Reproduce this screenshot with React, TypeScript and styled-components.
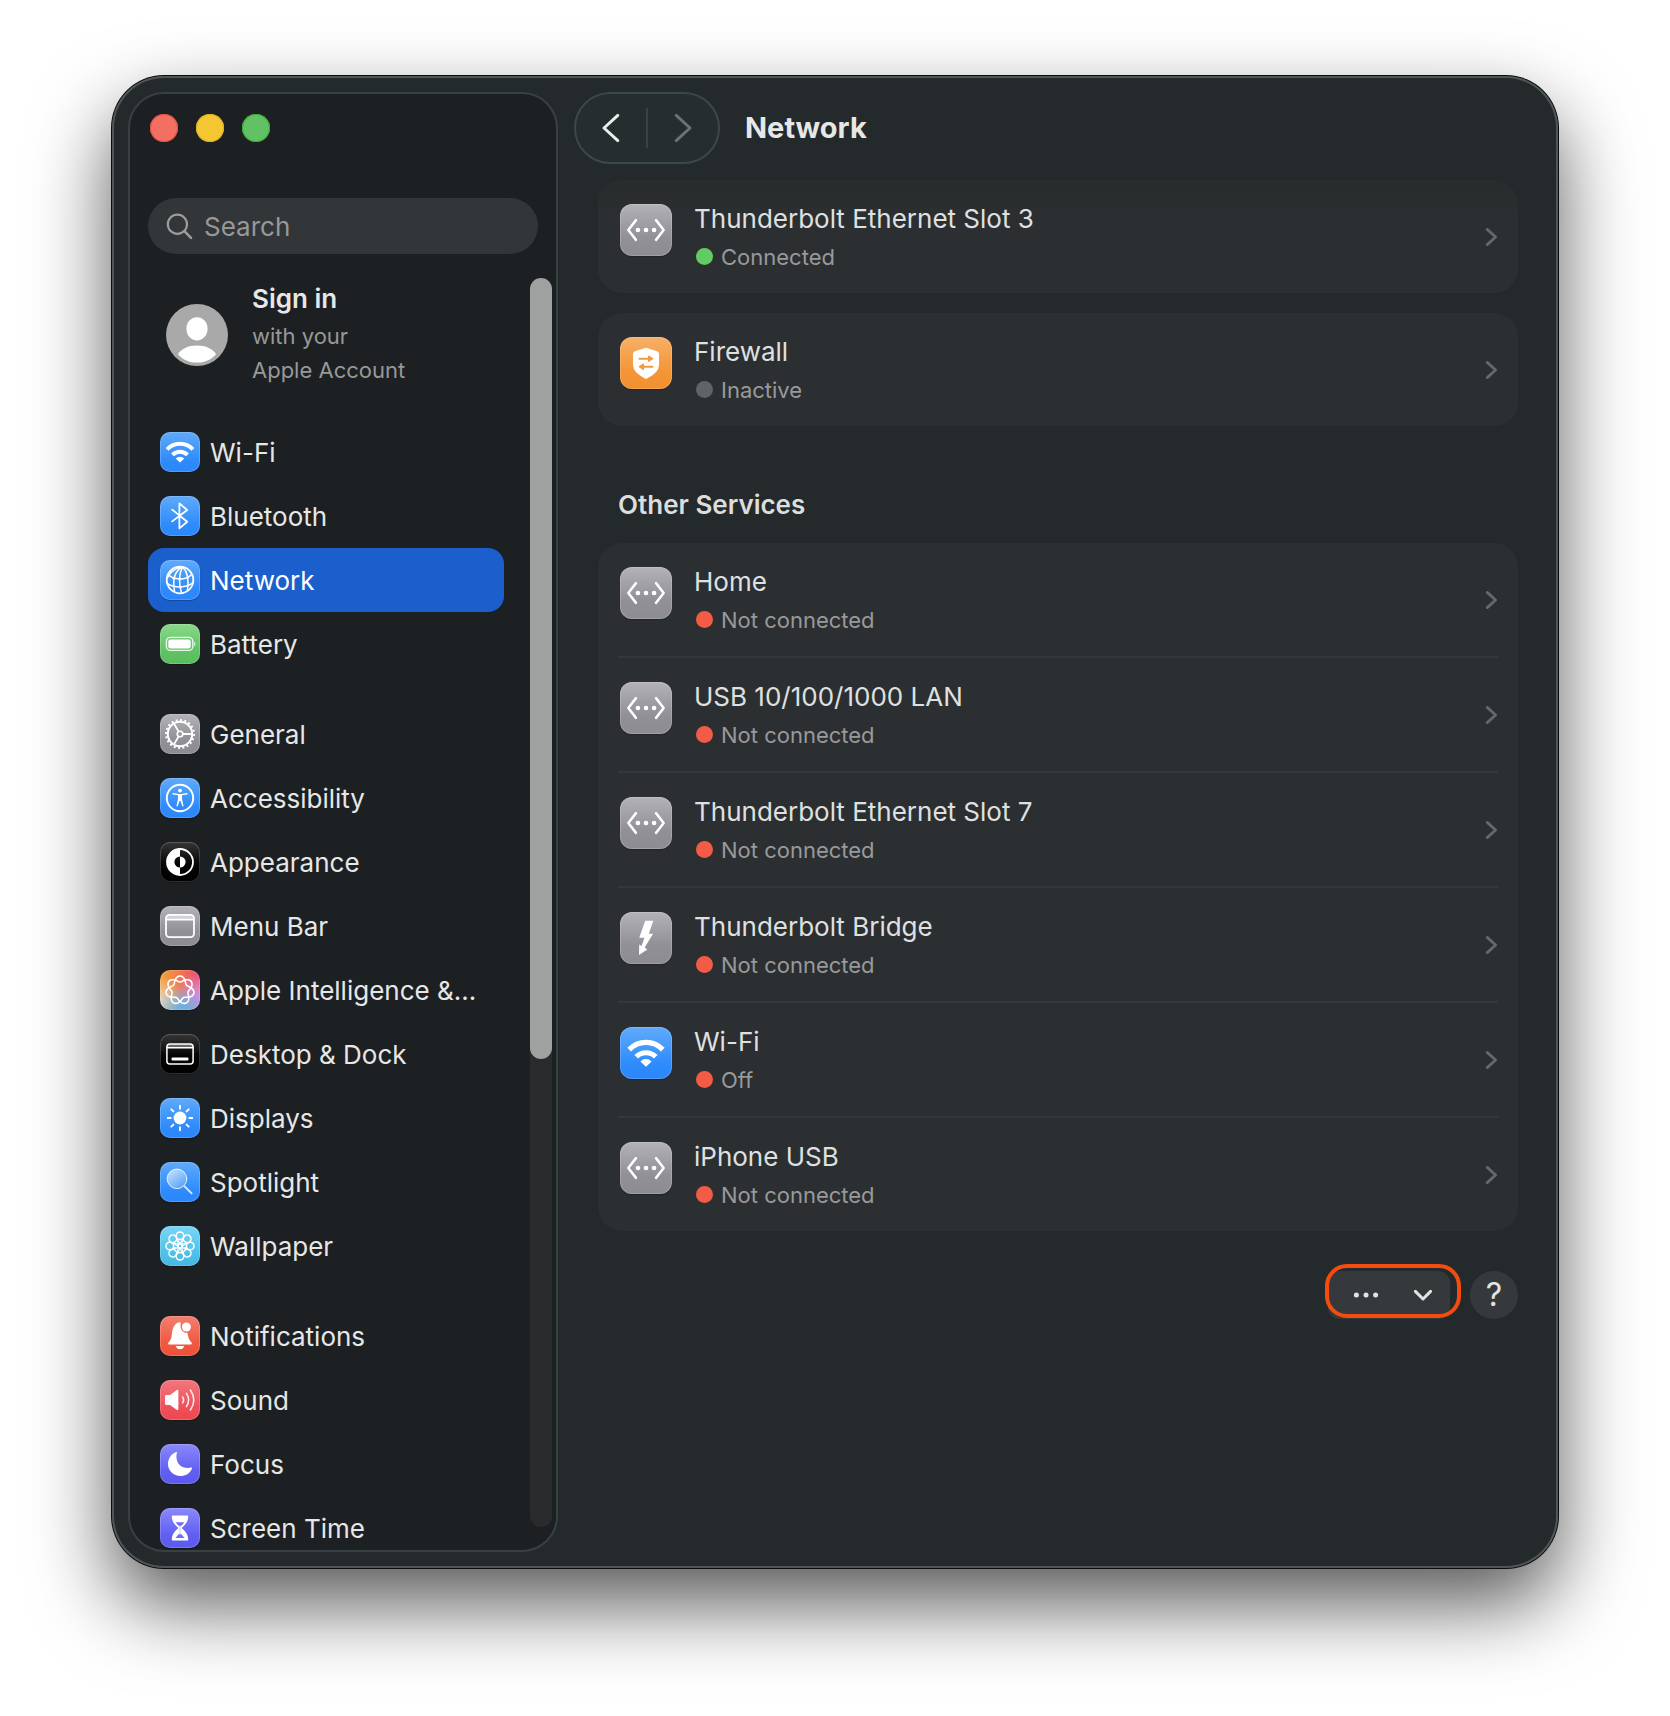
import React from "react";
import styled, { createGlobalStyle, css } from "styled-components";

const GlobalStyle = createGlobalStyle`
  *, *::before, *::after { box-sizing: border-box; }
  body {
    margin: 0;
    background: #fff;
    color: #e6e7e7;
    font-family: Inter, "Liberation Sans", sans-serif;
    font-size: 26px;
    line-height: 34px;
  }
  button, input { font: inherit; color: inherit; border: 0; padding: 0; background: none; }
  ul { list-style: none; margin: 0; padding: 0; }
  h1, h2, p { margin: 0; }
  svg { display: block; }
`;

const Desktop = styled.div`
  height: 100vh;
  min-height: 720px;
  padding: 76px 112px 148px;
`;

const Window = styled.div`
  display: flex;
  height: 100%;
  padding: 16px 0 16px 16px;
  border-radius: 52px;
  background: #24292b;
  box-shadow: inset 0 0 0 2px #505657, 0 0 0 1px #0a0c0c,
    0 36px 80px rgba(0, 0, 0, 0.66);
`;

const Sidebar = styled.aside`
  flex: 0 0 430px;
  display: flex;
  flex-direction: column;
  padding: 20px 4px 0 18px;
  border: 2px solid #374144;
  border-radius: 36px;
  background: #1d2022;
  overflow: hidden;
`;

const TrafficLights = styled.div`
  display: flex;
  gap: 18px;
  padding-left: 2px;
`;

const Light = styled.button<{ $fill: string; $edge: string }>`
  width: 28px;
  height: 28px;
  border-radius: 50%;
  background: ${(p) => p.$fill};
  box-shadow: inset 0 0 0 1px ${(p) => p.$edge};
`;

const SearchField = styled.label`
  display: flex;
  align-items: center;
  gap: 10px;
  height: 56px;
  margin: 56px 14px 24px 0;
  padding: 0 18px;
  border-radius: 28px;
  background: #333638;
  color: #9a9c9d;
`;

const SearchInput = styled.input`
  flex: 1;
  min-width: 0;
  padding-top: 2px;
  outline: none;
  &::placeholder { color: #979999; opacity: 1; }
`;

const Scroller = styled.div`
  flex: 1;
  min-height: 0;
  display: flex;
  gap: 26px;
`;

const NavArea = styled.nav`
  flex: 1;
  min-width: 0;
  overflow-y: auto;
  scrollbar-width: none;
`;

const ScrollTrack = styled.div`
  width: 22px;
  margin-bottom: 23px;
  border-radius: 11px;
  background: #2a2b2c;
`;

const ScrollThumb = styled.div`
  height: 62.5%;
  min-height: 44px;
  border-radius: 11px;
  background: #9fa1a0;
`;

const Account = styled.a`
  display: flex;
  align-items: center;
  gap: 24px;
  padding: 4px 18px 0;
  margin-bottom: 33px;
  color: inherit;
  text-decoration: none;
`;

const AccountName = styled.p`
  font-weight: 600;
  margin-bottom: 3px;
`;

const AccountHint = styled.p`
  font-size: 22px;
  color: #979999;
`;

const NavGroup = styled.ul`
  & + & { margin-top: 26px; }
`;

const NavItem = styled.a<{ $active?: boolean }>`
  display: flex;
  align-items: center;
  gap: 10px;
  height: 64px;
  padding: 0 12px;
  border-radius: 16px;
  color: inherit;
  text-decoration: none;
  white-space: nowrap;
  ${(p) =>
    p.$active &&
    css`
      background: #1a5fcc;
      color: #fff;
    `}
`;

const NavLabel = styled.span`
  padding-top: 2px;
`;

const tones = {
  blue: "linear-gradient(#60aafb, #2f8cfc 70%, #2a86fa)",
  green: "linear-gradient(#8bd88a, #60c466 65%, #58bd5d)",
  gray: "linear-gradient(#b3b2b8, #929097 65%, #8e8c93)",
  black: "linear-gradient(#363636, #050505 55%, #000)",
  cyan: "linear-gradient(#7cd5f6, #4fc1ea 65%, #45b7e0)",
  red: "linear-gradient(#f27f70, #f15a42 65%, #ee5039)",
  pink: "linear-gradient(#f2777f, #f0505a 65%, #ee4751)",
  indigo: "linear-gradient(#8b89fb, #6260f3 65%, #5c59ee)",
  orange: "linear-gradient(#f6b066, #f49638 65%, #f28f2e)",
  spectrum:
    "radial-gradient(circle at 55% 105%, #4db5fb 0, rgba(77,181,251,0) 55%), radial-gradient(circle at 100% 70%, #d48cf6 0, rgba(212,140,246,0) 55%), radial-gradient(circle at 95% 15%, #ef4a68 0, rgba(239,74,104,0) 70%), radial-gradient(circle at 0 80%, #e6d6c8 0, rgba(233,208,180,0) 50%), #f1a13c",
};
type Tone = keyof typeof tones;

const Tile = styled.span<{ $tone: Tone; $large?: boolean }>`
  flex: none;
  width: ${(p) => (p.$large ? 52 : 40)}px;
  height: ${(p) => (p.$large ? 52 : 40)}px;
  margin-top: ${(p) => (p.$large ? 2 : 0)}px;
  border-radius: ${(p) => (p.$large ? 12 : 10)}px;
  background: ${(p) => tones[p.$tone]};
  box-shadow: inset 0 0 0 1px rgba(255, 255, 255, 0.18), 0 1px 1px rgba(0, 0, 0, 0.25);
  & > svg { width: 100%; height: 100%; }
`;

const Main = styled.main`
  flex: 1;
  min-width: 0;
  display: flex;
  flex-direction: column;
`;

const Toolbar = styled.header`
  display: flex;
  align-items: center;
  gap: 25px;
  padding-left: 16px;
`;

const HistoryButtons = styled.div`
  display: flex;
  align-items: center;
  width: 146px;
  height: 72px;
  border: 2px solid #3b484a;
  border-radius: 36px;
  background: #262d2f;
`;

const HistoryButton = styled.button`
  flex: 1;
  display: grid;
  place-items: center;
  height: 100%;
  color: #ececec;
  &:disabled { color: #6c7173; }
`;

const HistoryDivider = styled.span`
  width: 2px;
  height: 40px;
  background: #3b4244;
`;

const Title = styled.h1`
  font-size: 29px;
  font-weight: 700;
`;

const Content = styled.div`
  padding: 16px 40px 0;
`;

const Card = styled.ul`
  padding: 0 20px;
  border-radius: 24px;
  background: #2c2f31;
  & + & { margin-top: 20px; }
`;

const FadedCard = styled(Card)`
  background: linear-gradient(#282c2d, #2c2f31 40px);
`;

const SectionTitle = styled.h2`
  margin: 62px 20px 21px;
  font-size: 26px;
  font-weight: 600;
  color: #dcdddd;
`;

const ServiceItem = styled.li`
  & + & { border-top: 2px solid #34383a; }
`;

const ServiceButton = styled.button`
  display: flex;
  align-items: flex-start;
  gap: 22px;
  width: 100%;
  padding: 22px 0 22px 2px;
  text-align: left;
`;

const ServiceText = styled.span`
  flex: 1;
  display: grid;
  gap: 8px;
`;

const ServiceName = styled.span`
  line-height: 33px;
  color: #dfe0e0;
`;

const ServiceStatus = styled.span`
  display: flex;
  align-items: center;
  gap: 8px;
  padding-left: 2px;
  font-size: 22px;
  line-height: 28px;
  color: #989a9b;
`;

const StatusDot = styled.span<{ $color: string }>`
  width: 17px;
  height: 17px;
  margin-bottom: 1px;
  border-radius: 50%;
  background: ${(p) => p.$color};
`;

const Disclosure = styled.span`
  align-self: center;
  color: #65696b;
`;

const Footer = styled.footer`
  display: flex;
  justify-content: flex-end;
  gap: 20px;
  margin-top: 40px;
`;

const MenuAnchor = styled.div`
  position: relative;
`;

const MenuButton = styled.button`
  display: flex;
  align-items: center;
  justify-content: space-between;
  width: 122px;
  height: 48px;
  padding: 0 17px 0 25px;
  border-radius: 12px;
  background: #35393b;
  color: #e2e3e3;
`;

const Highlight = styled.span`
  position: absolute;
  inset: -7px -11px 1px -3px;
  border: 4px solid #f44c10;
  border-radius: 22px;
  pointer-events: none;
`;

const HelpButton = styled.button`
  width: 48px;
  height: 48px;
  border-radius: 50%;
  background: #35393b;
  font-size: 32px;
  color: #e2e3e3;
`;

/* ---------- glyphs, all on a 40-unit grid ---------- */

const Glyph = ({ children }: { children: React.ReactNode }) => (
  <svg viewBox="0 0 40 40" fill="none" stroke="#fff" strokeWidth="2" strokeLinecap="round" strokeLinejoin="round" aria-hidden="true">
    {children}
  </svg>
);

const knot = (() => {
  const pts: string[] = [];
  for (let i = 0; i < 280; i++) {
    const t = (i / 280) * Math.PI * 4;
    const r = 11.2 + 3 * Math.cos(3.5 * t);
    pts.push(`${(20 + r * Math.sin(t)).toFixed(2)} ${(20.2 - r * Math.cos(t)).toFixed(2)}`);
  }
  return `M${pts.join("L")}Z`;
})();

const octants = [0, 45, 90, 135, 180, 225, 270, 315];
const solid = { fill: "#fff", stroke: "none" };

const glyphs = {
  wifi: (
    <g strokeLinecap="butt" strokeWidth="4">
      <path d="M7.1 17.4A17.6 17.6 0 0 1 32.9 17.4" />
      <path d="M12.5 22.9A10.6 10.6 0 0 1 27.5 22.9" />
      <path d="M15.7 26.5A6 6 0 0 1 24.3 26.5L20 30.6Z" {...solid} />
    </g>
  ),
  bluetooth: <path d="M12.2 13.6L27.2 25.8L19.4 32.4V7.4L27.2 14L12.2 25.4" strokeWidth="1.8" />,
  globe: (
    <g strokeWidth="1.5">
      <circle cx="20" cy="20" r="13.3" strokeWidth="1.8" />
      <path d="M22.5 7C15.5 10.5 12 18 14.6 31.8M22.5 7C19.5 13 18.6 23 21.5 33M22.5 7C27 11 29 20 27.4 30.6M20.5 7C13 9.5 9 14 7.4 18" />
      <path d="M8 14C13 20.5 26 20.5 31.6 14.4M7.3 23.4C13 28 27 28.6 32.8 22.6" />
      <g {...solid}>
        <circle cx="13.6" cy="18.2" r="1.3" />
        <circle cx="19.9" cy="19" r="1.3" />
        <circle cx="27.6" cy="17.6" r="1.3" />
        <circle cx="20.4" cy="27" r="1.3" />
      </g>
    </g>
  ),
  battery: (
    <>
      <rect x="6.4" y="13.4" width="26.4" height="13" rx="4" strokeWidth="1.4" opacity="0.85" />
      <rect x="8.3" y="15.4" width="22.4" height="9" rx="2.2" {...solid} />
      <path d="M34.3 17.4Q36.4 20 34.3 22.4Z" {...solid} />
    </>
  ),
  gear: (
    <>
      <circle cx="20" cy="20" r="12.2" strokeWidth="2" />
      <circle cx="20" cy="20" r="14" strokeWidth="2" strokeLinecap="butt" pathLength="40" strokeDasharray="0.9 1.1" />
      <circle cx="20" cy="20" r="2.8" strokeWidth="1.6" />
      <path d="M23 20H31.5M18.5 17.4L14.2 10M18.5 22.6L14.2 30" strokeWidth="1.8" />
    </>
  ),
  accessibility: (
    <>
      <circle cx="20" cy="20" r="13.2" strokeWidth="1.9" />
      <circle cx="20" cy="12.6" r="1.9" {...solid} />
      <path d="M13 15.7L18.4 16.6Q20 16.8 21.6 16.6L27 15.7" strokeWidth="1.4" />
      <path d="M17.9 16.3H22.1L22 21L23.6 28.2L22.4 28.6L20.4 22.8H19.6L17.6 28.6L16.4 28.2L18 21Z" {...solid} />
    </>
  ),
  appearance: (
    <>
      <circle cx="20" cy="20" r="13" strokeWidth="1.8" />
      <path d="M20 7A13 13 0 0 0 20 33V25.6A5.6 5.6 0 0 1 20 14.4Z" {...solid} />
      <path d="M20 14.4A5.6 5.6 0 0 1 20 25.6Z" {...solid} />
    </>
  ),
  menubar: (
    <>
      <path d="M6 13V12A4 4 0 0 1 10 8.8H30A4 4 0 0 1 34 12V13Z" fill="#fff" stroke="none" opacity="0.5" />
      <rect x="6" y="8.8" width="28" height="22.4" rx="3.6" strokeWidth="1.8" />
      <path d="M6.5 13.6H33.5" strokeWidth="1.8" />
    </>
  ),
  intelligence: <path d={knot} strokeWidth="1.6" />,
  dock: (
    <>
      <path d="M7 13V12A3.4 3.4 0 0 1 10.4 10H29.6A3.4 3.4 0 0 1 33 12V13Z" fill="#fff" stroke="none" opacity="0.35" />
      <rect x="6.9" y="10" width="26.2" height="20" rx="3" strokeWidth="1.5" />
      <path d="M7 13.8H33" strokeWidth="1.4" />
      <rect x="11.6" y="23.4" width="16.8" height="3.2" rx="0.8" {...solid} />
    </>
  ),
  sun: (
    <>
      <circle cx="20" cy="20" r="6.4" {...solid} />
      {octants.map((a) => (
        <path key={a} d="M20 7.7V10.7" strokeWidth="1.9" transform={`rotate(${a} 20 20)`} />
      ))}
    </>
  ),
  spotlight: (
    <>
      <defs>
        <linearGradient id="lens" x1="0" y1="0" x2="1" y2="1">
          <stop offset="0" stopColor="#fff" stopOpacity="0.7" />
          <stop offset="1" stopColor="#fff" stopOpacity="0.08" />
        </linearGradient>
      </defs>
      <circle cx="17" cy="16.8" r="9.8" fill="url(#lens)" strokeWidth="1" strokeOpacity="0.8" />
      <path d="M24.6 24.4L31.6 31.4" strokeWidth="2" strokeOpacity="0.8" />
    </>
  ),
  flower: (
    <g strokeWidth="1.5">
      {octants.map((a) => (
        <g key={a} transform={`rotate(${a} 20 20)`}>
          <circle cx="20" cy="9.8" r="3.8" />
          <path d="M17.2 12.6L22 21.6M22.8 12.6L18 21.6" strokeWidth="1.1" />
        </g>
      ))}
      <circle cx="20" cy="20" r="1.2" fill="#52c2ea" stroke="none" />
    </g>
  ),
  bell: (
    <>
      <path d="M19.6 6.2C21.4 6.2 20.6 8 20.5 10.4C20.6 14 23.4 16.8 27.4 16.8C28 21 29 24 31.4 26.4C32.4 27.6 31.8 28.4 30.8 28.4H9.2C8 28.4 7.6 27.6 8.6 26.4C13.6 21 10.6 16.4 13.6 11C15 8.4 16.6 6.6 19.6 6.2Z" {...solid} />
      <circle cx="26.4" cy="11" r="4.5" {...solid} />
      <path d="M16 30H24Q23.4 33.2 20 33.2Q16.6 33.2 16 30Z" {...solid} />
    </>
  ),
  sound: (
    <>
      <path d="M5 16.4Q5 15 6.4 15H10L16.6 10.2Q18.4 9.2 18.4 11.2V28.8Q18.4 30.8 16.6 29.8L10 25H6.4Q5 25 5 23.6Z" {...solid} />
      <g strokeWidth="1.6" opacity="0.85">
        <path d="M22.6 17Q24.6 20 22.6 23" />
        <path d="M26.4 13.4Q30.8 20 26.4 26.6" />
        <path d="M30.4 10Q37.2 20 30.4 30" />
      </g>
    </>
  ),
  moon: (
    <path d="M17 8.3C15 15 18 26 31.2 23.6C32.2 23.4 32.2 24.4 31.8 25C29.8 29.4 25.6 32 20.4 32C13.6 32 8 26.8 8 20C8 14.6 11.2 10 15.8 8.2C16.6 7.8 17.3 7.8 17 8.3Z" {...solid} />
  ),
  hourglass: (
    <>
      <path d="M12.6 7.6H27.4Q28.4 7.6 28.2 9C27.8 14 25.6 16.4 21.6 20C25.6 23.6 27.8 26 28.2 31Q28.4 32.4 27.4 32.4H12.6Q11.6 32.4 11.8 31C12.2 26 14.4 23.6 18.4 20C14.4 16.4 12.2 14 11.8 9Q11.6 7.6 12.6 7.6Z" {...solid} />
      <path d="M15.8 14.2H24.2C22.8 16.4 21 17.6 20.5 19V25.2L24.6 30H15.4L19.5 25.2V19C19 17.6 17.2 16.4 15.8 14.2Z" fill="#6f6df5" stroke="none" />
      <path d="M20 18V26" strokeWidth="1.2" />
    </>
  ),
  ethernet: (
    <>
      <path d="M12.3 12.4L6.4 20L12.3 27.6M27.7 12.4L33.6 20L27.7 27.6" strokeWidth="1.9" />
      <circle cx="13.8" cy="20" r="1.8" {...solid} />
      <circle cx="20" cy="20" r="1.8" {...solid} />
      <circle cx="26.2" cy="20" r="1.8" {...solid} />
    </>
  ),
  thunderbolt: (
    <path d="M19.4 6.8H25.6L22.2 16.8H25.4L19 27.4L21 28.8L14.6 33L14.8 25L16.6 26.2L18.8 19.8H14.8Z" {...solid} />
  ),
  firewall: (
    <>
      <path d="M20 8.2Q20.6 8.2 28.4 11Q30 11.6 30 13V21.4Q30 27.4 20.8 32Q20 32.4 19.2 32Q10 27.4 10 21.4V13Q10 11.6 11.6 11Q19.4 8.2 20 8.2Z" {...solid} />
      <g stroke="#f4993f" strokeWidth="1.6">
        <path d="M15 16.7H22M18 22.9H25" />
        <path d="M22 14.6L25.2 16.7L22 18.8ZM18 20.8L14.8 22.9L18 25Z" fill="#f4993f" strokeWidth="0.8" />
      </g>
    </>
  ),
};
type GlyphName = keyof typeof glyphs;

const Icon = ({ name, tone, large }: { name: GlyphName; tone: Tone; large?: boolean }) => (
  <Tile $tone={tone} $large={large}>
    <Glyph>{glyphs[name]}</Glyph>
  </Tile>
);

/* ---------- data ---------- */

const navGroups: { label: string; icon: GlyphName; tone: Tone }[][] = [
  [
    { label: "Wi-Fi", icon: "wifi", tone: "blue" },
    { label: "Bluetooth", icon: "bluetooth", tone: "blue" },
    { label: "Network", icon: "globe", tone: "blue" },
    { label: "Battery", icon: "battery", tone: "green" },
  ],
  [
    { label: "General", icon: "gear", tone: "gray" },
    { label: "Accessibility", icon: "accessibility", tone: "blue" },
    { label: "Appearance", icon: "appearance", tone: "black" },
    { label: "Menu Bar", icon: "menubar", tone: "gray" },
    { label: "Apple Intelligence &...", icon: "intelligence", tone: "spectrum" },
    { label: "Desktop & Dock", icon: "dock", tone: "black" },
    { label: "Displays", icon: "sun", tone: "blue" },
    { label: "Spotlight", icon: "spotlight", tone: "blue" },
    { label: "Wallpaper", icon: "flower", tone: "cyan" },
  ],
  [
    { label: "Notifications", icon: "bell", tone: "red" },
    { label: "Sound", icon: "sound", tone: "pink" },
    { label: "Focus", icon: "moon", tone: "indigo" },
    { label: "Screen Time", icon: "hourglass", tone: "indigo" },
  ],
];

const GREEN = "#62cb61";
const GRAY = "#606466";
const RED = "#f25c46";

type ServiceData = { name: string; status: string; color: string; icon: GlyphName; tone: Tone };

const ethernet: ServiceData = { name: "Thunderbolt Ethernet Slot 3", status: "Connected", color: GREEN, icon: "ethernet", tone: "gray" };
const firewall: ServiceData = { name: "Firewall", status: "Inactive", color: GRAY, icon: "firewall", tone: "orange" };
const others: ServiceData[] = [
  { name: "Home", status: "Not connected", color: RED, icon: "ethernet", tone: "gray" },
  { name: "USB 10/100/1000 LAN", status: "Not connected", color: RED, icon: "ethernet", tone: "gray" },
  { name: "Thunderbolt Ethernet Slot 7", status: "Not connected", color: RED, icon: "ethernet", tone: "gray" },
  { name: "Thunderbolt Bridge", status: "Not connected", color: RED, icon: "thunderbolt", tone: "gray" },
  { name: "Wi-Fi", status: "Off", color: RED, icon: "wifi", tone: "blue" },
  { name: "iPhone USB", status: "Not connected", color: RED, icon: "ethernet", tone: "gray" },
];

const Service = ({ item }: { item: ServiceData }) => (
  <ServiceItem>
    <ServiceButton type="button">
      <Icon name={item.icon} tone={item.tone} large />
      <ServiceText>
        <ServiceName>{item.name}</ServiceName>
        <ServiceStatus>
          <StatusDot $color={item.color} />
          {item.status}
        </ServiceStatus>
      </ServiceText>
      <Disclosure>
        <svg width="14" height="20" viewBox="0 0 14 20" fill="none" stroke="currentColor" strokeWidth="2.8" strokeLinecap="round" strokeLinejoin="round" aria-hidden="true">
          <path d="M3.2 2.4L11.6 10L3.2 17.6" />
        </svg>
      </Disclosure>
    </ServiceButton>
  </ServiceItem>
);

const Chevron = ({ back }: { back?: boolean }) => (
  <svg width="20" height="32" viewBox="0 0 20 32" fill="none" stroke="currentColor" strokeWidth="3" strokeLinecap="round" strokeLinejoin="round" aria-hidden="true">
    <path d={back ? "M16.8 3.4L3 16L16.8 28.6" : "M3.2 3.4L17 16L3.2 28.6"} />
  </svg>
);

export default function App() {
  return (
    <Desktop>
      <GlobalStyle />
      <Window>
        <Sidebar>
          <TrafficLights>
            <Light type="button" aria-label="Close" $fill="#f26f62" $edge="#e14f40" />
            <Light type="button" aria-label="Minimize" $fill="#f4c732" $edge="#dcae28" />
            <Light type="button" aria-label="Zoom" $fill="#61c164" $edge="#3fa53c" />
          </TrafficLights>
          <SearchField>
            <svg width="28" height="28" viewBox="0 0 28 28" fill="none" stroke="currentColor" strokeWidth="2.2" strokeLinecap="round" aria-hidden="true">
              <circle cx="11.4" cy="12.2" r="9.6" />
              <path d="M18.4 19.2L25 25.8" strokeWidth="2.6" />
            </svg>
            <SearchInput type="search" placeholder="Search" aria-label="Search" />
          </SearchField>
          <Scroller>
            <NavArea aria-label="Settings">
              <Account href="#account">
                <svg width="62" height="62" viewBox="0 0 62 62" aria-hidden="true">
                  <circle cx="31" cy="31" r="31" fill="#a9a9a9" />
                  <ellipse cx="31" cy="24.8" rx="10.6" ry="11.6" fill="#fff" />
                  <path d="M12 50.4C15 45 22 41.6 31 41.6S47 45 50 50.4C45 55.6 38.6 58.6 31 58.6S17 55.6 12 50.4Z" fill="#fff" />
                </svg>
                <div>
                  <AccountName>Sign in</AccountName>
                  <AccountHint>
                    with your
                    <br />
                    Apple Account
                  </AccountHint>
                </div>
              </Account>
              {navGroups.map((group, i) => (
                <NavGroup key={i}>
                  {group.map((item) => {
                    const active = item.label === "Network";
                    return (
                      <li key={item.label}>
                        <NavItem href={`#${item.icon}`} $active={active} aria-current={active ? "page" : undefined}>
                          <Icon name={item.icon} tone={item.tone} />
                          <NavLabel>{item.label}</NavLabel>
                        </NavItem>
                      </li>
                    );
                  })}
                </NavGroup>
              ))}
            </NavArea>
            <ScrollTrack>
              <ScrollThumb />
            </ScrollTrack>
          </Scroller>
        </Sidebar>
        <Main>
          <Toolbar>
            <HistoryButtons>
              <HistoryButton type="button" aria-label="Back">
                <Chevron back />
              </HistoryButton>
              <HistoryDivider />
              <HistoryButton type="button" aria-label="Forward" disabled>
                <Chevron />
              </HistoryButton>
            </HistoryButtons>
            <Title>Network</Title>
          </Toolbar>
          <Content>
            <FadedCard>
              <Service item={ethernet} />
            </FadedCard>
            <Card>
              <Service item={firewall} />
            </Card>
            <SectionTitle>Other Services</SectionTitle>
            <Card>
              {others.map((item) => (
                <Service key={item.name} item={item} />
              ))}
            </Card>
            <Footer>
              <MenuAnchor>
                <MenuButton type="button" aria-label="More actions" aria-haspopup="menu">
                  <svg width="26" height="8" viewBox="0 0 26 8" fill="currentColor" aria-hidden="true">
                    <circle cx="3.4" cy="4" r="2.5" />
                    <circle cx="13" cy="4" r="2.5" />
                    <circle cx="22.6" cy="4" r="2.5" />
                  </svg>
                  <svg width="20" height="14" viewBox="0 0 20 14" fill="none" stroke="currentColor" strokeWidth="3" strokeLinecap="round" strokeLinejoin="round" aria-hidden="true">
                    <path d="M2.4 3.4L10 11L17.6 3.4" />
                  </svg>
                </MenuButton>
                <Highlight />
              </MenuAnchor>
              <HelpButton type="button" aria-label="Help">
                ?
              </HelpButton>
            </Footer>
          </Content>
        </Main>
      </Window>
    </Desktop>
  );
}
